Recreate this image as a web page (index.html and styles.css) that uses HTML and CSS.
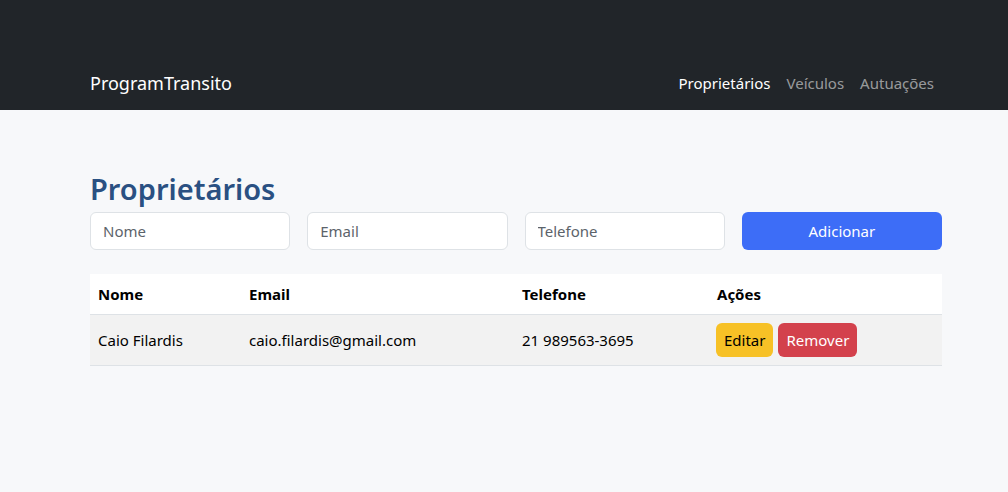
FILE: index.html
```html
<!DOCTYPE html>
<html lang="pt-BR">
<head>
<meta charset="utf-8">
<title>ProgramTransito</title>
<link rel="stylesheet" href="styles.css">
</head>
<body>
<header class="navbar">
  <div class="nav-inner">
    <a class="brand" href="#">ProgramTransito</a>
    <nav class="nav-links">
      <a class="nav-link active" href="#">Proprietários</a>
      <a class="nav-link" href="#">Veículos</a>
      <a class="nav-link" href="#">Autuações</a>
    </nav>
  </div>
</header>
<main class="container">
  <h1 class="title">Proprietários</h1>
  <form class="form-row">
    <input class="field" type="text" placeholder="Nome">
    <input class="field" type="text" placeholder="Email">
    <input class="field" type="text" placeholder="Telefone">
    <button class="btn-add" type="button">Adicionar</button>
  </form>
  <table class="table">
    <thead>
      <tr>
        <th class="c-nome">Nome</th>
        <th class="c-email">Email</th>
        <th class="c-tel">Telefone</th>
        <th class="c-acoes">Ações</th>
      </tr>
    </thead>
    <tbody>
      <tr>
        <td>Caio Filardis</td>
        <td>caio.filardis@gmail.com</td>
        <td>21 989563-3695</td>
        <td class="c-actions"><div class="actions"><button class="btn btn-edit" type="button">Editar</button><button class="btn btn-remove" type="button">Remover</button></div></td>
      </tr>
    </tbody>
  </table>
</main>
</body>
</html>
```

FILE: styles.css
```css
* { box-sizing: border-box; }
html, body { margin: 0; padding: 0; }
body {
  background: #f7f8fa;
  font-family: "Noto Sans", "Open Sans", sans-serif;
  font-size: 15px;
  color: #000;
}
.navbar {
  background: #212529;
  height: 110px;
  display: flex;
  align-items: flex-end;
}
.nav-inner {
  width: 852px;
  margin-left: 90px;
  display: flex;
  justify-content: space-between;
  align-items: center;
  padding-bottom: 13px;
}
.brand {
  color: #fff;
  text-decoration: none;
  font-size: 18px;
  line-height: 28px;
}
.nav-links { display: flex; }
.nav-link {
  color: rgba(255,255,255,0.55);
  text-decoration: none;
  padding: 0 8px;
  font-size: 15px;
  line-height: 24px;
}
.nav-link.active { color: #fff; }
.container {
  width: 852px;
  margin-left: 90px;
  padding-top: 60px;
}
.title {
  margin: 0 0 4px;
  color: #2a5082;
  font-size: 29px;
  font-weight: 600;
  line-height: 38px;
}
.form-row {
  display: grid;
  grid-template-columns: repeat(4, minmax(0, 1fr));
  gap: 17px;
  margin: 0 0 24px;
}
.field {
  width: 100%;
  height: 38px;
  border: 1px solid #dee2e6;
  border-radius: 6px;
  background: #fff;
  padding: 0 12px;
  font: inherit;
  color: #212529;
}
.field::placeholder { color: #5c636a; }
.btn-add {
  width: 100%;
  height: 38px;
  border: none;
  border-radius: 6px;
  background: #3d6df7;
  color: #fff;
  font: inherit;
}
.table {
  width: 100%;
  border-collapse: collapse;
}
.table th {
  text-align: left;
  background: #fff;
  font-weight: 700;
  height: 40px;
  padding: 0 8px;
  border-bottom: 1px solid #dee2e6;
}
.table td {
  background: #f2f2f2;
  height: 51px;
  padding: 0 8px;
  border-bottom: 1px solid #dee2e6;
}
.c-nome { width: 151px; }
.c-email { width: 273px; }
.c-tel { width: 195px; }
.table td.c-actions { padding-left: 7px; }
.actions { display: flex; gap: 5px; align-items: center; }
.btn {
  height: 34px;
  border: none;
  border-radius: 6px;
  padding: 0 8px;
  font: inherit;
}
.btn-edit { background: #f7c126; color: #000; }
.btn-remove { background: #d3414c; color: #fff; }
```
